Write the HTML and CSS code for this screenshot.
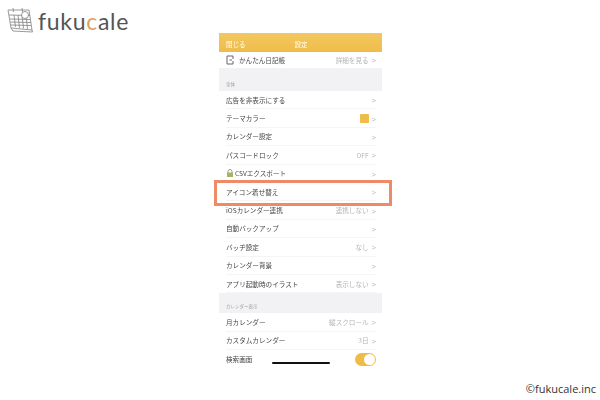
FILE: index.html
```html
<!DOCTYPE html>
<html lang="ja">
<head>
    <meta charset="UTF-8">
    <title>fukucale</title>
    <link rel="stylesheet" href="styles.css">
</head>
<body>
    <div class="page">
        <div class="brand">
            <svg class="brand-icon" width="26" height="26" viewBox="0 0 26 26" fill="none" stroke="#808083" stroke-width="0.8">
                <path d="M1 3 L22 3 L25 23 L4 21 Z" fill="#fff"/>
                <path d="M25 23 L25.500 25 L6 24 L4 21"/>
                <path d="M2 8 L23 8.500"/>
                <path d="M3 12 L23 12.500 M3.500 15 L24 15.500 M4 18 L24 18.500 M7 8 L8.500 20 M11 8 L12.500 21 M15 8 L16.500 21.500 M19 8 L20.500 22"/>
                <path d="M6 1 L6.500 5 M15 1 L15.500 5"/>
                <circle cx="18" cy="8" r="3.500" fill="#fff"/>
            </svg>
            <span class="brand-name">fuku<span class="brand-accent">c</span>ale</span>
        </div>

        <div class="phone">
            <div class="nav">
                <span class="nav-close">閉じる</span>
                <span class="nav-title">設定</span>
            </div>

            <div class="list">
                <div class="row row-first">
                    <span class="row-label">
                        <svg class="diary-icon" width="8" height="10" viewBox="0 0 8 10" fill="none" stroke="#666" stroke-width="1">
                            <path d="M7 1 H1 V9 H7 V6 M7 4 V1 M3.500 5 H6"/>
                        </svg>
                        かんたん日記帳
                    </span>
                    <span class="row-value">詳細を見る<span class="chevron">&gt;</span></span>
                </div>

                <div class="section-head section-head-tall">全体</div>

                <div class="row"><span class="row-label">広告を非表示にする</span><span class="row-value"><span class="chevron">&gt;</span></span></div>
                <div class="row"><span class="row-label">テーマカラー</span><span class="row-value"><span class="swatch"></span><span class="chevron">&gt;</span></span></div>
                <div class="row"><span class="row-label">カレンダー設定</span><span class="row-value"><span class="chevron">&gt;</span></span></div>
                <div class="row"><span class="row-label">パスコードロック</span><span class="row-value">OFF<span class="chevron">&gt;</span></span></div>
                <div class="row">
                    <span class="row-label">
                        <svg class="lock-icon" width="8" height="8" viewBox="0 0 8 8">
                            <path d="M2 4 V2.500 a2 2 0 0 1 4 0 V4" fill="none" stroke="#999" stroke-width="1"/>
                            <rect x="1" y="3.500" width="6" height="4.500" fill="#a3b55a"/>
                        </svg>CSVエクスポート
                    </span>
                    <span class="row-value"><span class="chevron">&gt;</span></span>
                </div>
                <div class="row"><span class="row-label">アイコン着せ替え</span><span class="row-value"><span class="chevron">&gt;</span></span></div>
                <div class="row"><span class="row-label">iOSカレンダー連携</span><span class="row-value">連携しない<span class="chevron">&gt;</span></span></div>
                <div class="row"><span class="row-label">自動バックアップ</span><span class="row-value"><span class="chevron">&gt;</span></span></div>
                <div class="row"><span class="row-label">バッヂ設定</span><span class="row-value">なし<span class="chevron">&gt;</span></span></div>
                <div class="row"><span class="row-label">カレンダー背景</span><span class="row-value"><span class="chevron">&gt;</span></span></div>
                <div class="row"><span class="row-label">アプリ起動時のイラスト</span><span class="row-value">表示しない<span class="chevron">&gt;</span></span></div>

                <div class="section-head">カレンダー表示</div>

                <div class="row"><span class="row-label">月カレンダー</span><span class="row-value">縦スクロール<span class="chevron">&gt;</span></span></div>
                <div class="row"><span class="row-label">カスタムカレンダー</span><span class="row-value">3日<span class="chevron">&gt;</span></span></div>
                <div class="row row-last"><span class="row-label">検索画面</span><span class="toggle"><span class="toggle-knob"></span></span></div>
            </div>

            <div class="home-bar"></div>
            <div class="highlight"></div>
        </div>

        <div class="credit">©fukucale.inc</div>
    </div>
</body>
</html>
```

FILE: styles.css
```css
body {
    margin: 0;
    background-color: #fff;
    font-family: "Noto Sans CJK JP", "Noto Sans", sans-serif;
}

.page {
    width: 600px;
    height: 400px;
    overflow: hidden;
}

/* Logo */
.brand {
    display: flex;
    align-items: center;
    gap: 5px;
    height: 33px;
    padding: 7px 0 0 7px;
    box-sizing: border-box;
}

.brand-icon {
    flex-shrink: 0;
}

.brand-name {
    margin-top: 2px;
    font-family: Lato, sans-serif;
    font-size: 23px;
    letter-spacing: 0.7px;
    color: #555555;
    line-height: 26px;
}

.brand-accent {
    color: #e0a060;
}

/* Phone */
.phone {
    position: relative;
    width: 163px;
    margin-left: 219px;
}

.nav {
    display: flex;
    align-items: center;
    height: 19px;
    padding: 2px 7px 0;
    box-sizing: border-box;
    background: linear-gradient(#f3c860, #efbc4a);
    color: #fff;
    font-size: 6.500px;
    filter: blur(0.4px);
}

.nav-title {
    margin-left: 49px;
}

.list {
    filter: blur(0.4px);
}

.row {
    display: flex;
    align-items: center;
    justify-content: space-between;
    height: 18.400px;
    margin: 0 6px 0 7px;
    border-bottom: 1px solid #f5f5f5;
    box-sizing: border-box;
    font-size: 6.600px;
    color: #444;
}

.row-first {
    height: 15px;
    border-bottom: none;
    margin-bottom: 1px;
}

.row-last {
    border-bottom: none;
}

.row-label {
    display: flex;
    align-items: center;
}

.diary-icon {
    margin-right: 5px;
}

.lock-icon {
    margin-right: 1px;
}

.row-value {
    display: flex;
    align-items: center;
    color: #b5b5b5;
}

.chevron {
    margin-left: 3px;
    margin-top: 2px;
    font-family: "Liberation Sans", sans-serif;
    font-size: 7.500px;
    color: #b5b5b5;
}

.swatch {
    width: 9px;
    height: 9px;
    border-radius: 1px;
    background-color: #efbc4a;
}

.section-head {
    display: flex;
    align-items: flex-end;
    height: 20px;
    padding: 0 7px 4px;
    box-sizing: border-box;
    background-color: #f2f2f5;
    font-size: 4.500px;
    color: #a0a0a0;
}

.section-head-tall {
    height: 23px;
}

.toggle {
    display: flex;
    justify-content: flex-end;
    align-items: center;
    width: 21px;
    height: 13px;
    padding: 1px;
    box-sizing: border-box;
    border-radius: 7px;
    background-color: #efbc4a;
}

.toggle-knob {
    width: 11px;
    height: 11px;
    border-radius: 50%;
    background-color: #fff;
}

.home-bar {
    position: absolute;
    left: 53px;
    top: 329px;
    width: 58px;
    height: 2px;
    border-radius: 1px;
    background-color: #111;
}

.highlight {
    position: absolute;
    left: -5px;
    top: 147px;
    width: 178px;
    height: 26px;
    box-sizing: border-box;
    border: 3.500px solid #ee8a66;
}

.credit {
    margin: 13px 4px 0 0;
    text-align: right;
    font-family: "Open Sans", sans-serif;
    font-size: 11px;
    color: #333;
}
```
